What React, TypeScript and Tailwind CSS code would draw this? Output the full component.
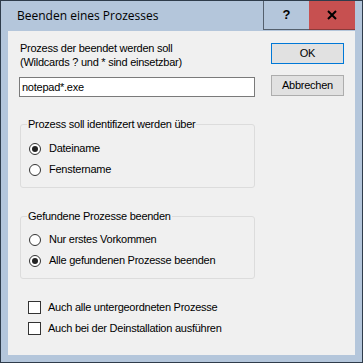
const font = { fontFamily: '"Liberation Sans", Arial, sans-serif' };

const Radio = ({ checked, label }: { checked?: boolean; label: string }) => (
    <label className="flex items-center h-[21px] text-[11px] tracking-[-0.25px] text-black">
        <span className="ml-[1px] w-[12px] h-[12px] rounded-full border border-[#333333] bg-white flex items-center justify-center">
            {checked && <span className="w-[6px] h-[6px] rounded-full bg-[#222222]"></span>}
        </span>
        <span className="ml-[8px]">{label}</span>
    </label>
);

const Check = ({ label }: { label: string }) => (
    <label className="flex items-center h-[21px] text-[11px] tracking-[-0.25px] text-black">
        <span className="w-[13px] h-[13px] border border-[#333333] bg-white"></span>
        <span className="ml-[7px]">{label}</span>
    </label>
);

const Group = ({ title, children }: { title: string; children: React.ReactNode }) => (
    <fieldset className="ml-[12px] w-[235px] border border-[#dcdcdc] rounded-[3px] px-[6px] pb-[7px]">
        <legend className="px-[1px] leading-[14px] text-[11px] tracking-[-0.25px] text-black">{title}</legend>
        <div className="pl-[1px]">{children}</div>
    </fieldset>
);

export default function App() {
    return (
        <div className="w-[363px] h-[363px] border border-[#2f3c4b] bg-[#b4c6db] flex flex-col" style={font}>
            {/* Title bar */}
            <div className="h-[30px] flex items-start shrink-0">
                <div className="pl-[16px] h-[29px] flex items-center text-[12px] text-black" style={{ fontFamily: '"Open Sans", "Noto Sans", sans-serif' }}>
                    Beenden eines Prozesses
                </div>
                <div className="ml-auto flex mr-[7px]">
                    <div className="w-[46px] h-[29px] border-l border-b border-[#55606d] flex items-center justify-center text-[13px] font-bold text-black">?</div>
                    <div className="w-[46px] h-[29px] bg-[#c75050] border-b border-[#8a3a3a] flex items-center justify-center">
                        <svg width="10" height="10" viewBox="0 0 10 10">
                            <path d="M1 1 L9 9 M9 1 L1 9" stroke="#000" strokeWidth="2" />
                        </svg>
                    </div>
                </div>
            </div>

            {/* Client area */}
            <div className="mx-[7px] mb-[7px] flex-1 bg-[#f0f0f0] flex flex-col">
                <div className="flex items-start pt-[10px]">
                    <div className="flex flex-col">
                        <div className="ml-[12px] text-[11px] leading-[14px] tracking-[-0.25px] text-black">
                            Prozess der beendet werden soll<br />(Wildcards ? und * sind einsetzbar)
                        </div>
                        <div className="ml-[11px] mt-[8px] w-[236px] h-[20px] border border-[#7a7a7a] bg-white flex items-center pl-[2px] text-[11px] tracking-[-0.25px] text-black">
                            notepad*.exe
                        </div>
                    </div>
                    <div className="ml-auto mr-[11px] flex flex-col">
                        <div className="mt-[2px] w-[73px] h-[21px] border border-[#0078d7] bg-[#e1e1e1] flex items-center justify-center text-[11px] tracking-[-0.25px] text-black">OK</div>
                        <div className="mt-[11px] w-[73px] h-[21px] border border-[#adadad] bg-[#e1e1e1] flex items-center justify-center text-[11px] tracking-[-0.25px] text-black">Abbrechen</div>
                    </div>
                </div>

                <div className="mt-[20px]">
                    <Group title="Prozess soll identifizert werden über">
                        <div className="mt-[7px]">
                            <Radio checked label="Dateiname" />
                            <Radio label="Fenstername" />
                        </div>
                    </Group>
                </div>

                <div className="mt-[21px]">
                    <Group title="Gefundene Prozesse beenden">
                        <div className="mt-[6px]">
                            <Radio label="Nur erstes Vorkommen" />
                            <Radio checked label="Alle gefundenen Prozesse beenden" />
                        </div>
                    </Group>
                </div>

                <div className="mt-[18px] ml-[20px] flex flex-col">
                    <Check label="Auch alle untergeordneten Prozesse" />
                    <Check label="Auch bei der Deinstallation ausführen" />
                </div>
            </div>
        </div>
    );
}
